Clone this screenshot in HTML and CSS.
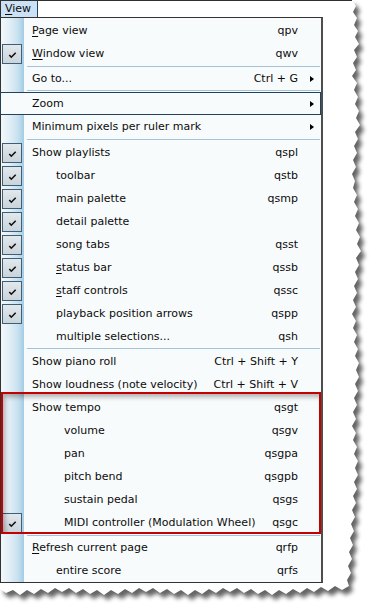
FILE: index.html
```html
<!DOCTYPE html>
<html>
<head>
<meta charset="utf-8">
<link rel="stylesheet" href="styles.css">
</head>
<body>
<div class="screen">
  <svg class="torn" width="374" height="609" viewBox="0 0 374 609">
    <defs>
      <filter id="blur" x="-10%" y="-10%" width="120%" height="120%"><feGaussianBlur stdDeviation="2"/></filter>
      <path id="paper" d="M0,0 L352,0 L356,6 L353,12 L357,18 L354,25 L358,31 L355,37 L359,44 L354,50 L357,57 L353,63 L356,70 L352,76 L357,83 L354,90 L358,97 L355,104 L359,111 L356,118 L360,125 L355,132 L358,139 L354,146 L357,153 L353,160 L356,167 L352,174 L355,181 L353,188 L357,195 L354,202 L358,209 L355,216 L359,223 L356,230 L360,237 L357,244 L361,251 L356,258 L359,265 L355,272 L358,279 L354,286 L357,293 L353,300 L356,307 L352,314 L356,321 L353,328 L357,335 L354,342 L358,349 L355,356 L359,363 L356,370 L359,377 L355,384 L358,391 L354,398 L357,405 L353,412 L356,419 L352,426 L356,433 L353,440 L357,447 L354,454 L358,461 L355,468 L358,475 L354,482 L357,489 L353,496 L356,503 L352,510 L355,517 L351,524 L354,531 L350,538 L353,545 L349,552 L352,559 L348,566 L351,573 L347,580 L349,586 L342,590 L335,586 L328,591 L321,587 L314,592 L307,588 L300,593 L293,589 L286,594 L279,590 L272,595 L265,590 L258,594 L251,589 L244,593 L237,588 L230,592 L223,588 L216,593 L209,589 L202,594 L195,590 L188,595 L181,590 L174,594 L167,589 L160,593 L153,588 L146,592 L139,588 L132,593 L125,589 L118,594 L111,590 L104,595 L97,590 L90,594 L83,589 L76,593 L69,588 L62,592 L55,588 L48,593 L41,589 L34,594 L27,590 L20,595 L13,590 L6,593 L0,589 Z"/>
    </defs>
    <use href="#paper" class="shadow" transform="translate(4,5)" filter="url(#blur)"/>
    <use href="#paper" class="sheet"/>
  </svg>

  <div class="bar"><span class="bar-item"><u>V</u>iew</span></div>

  <div class="menu">
    <div class="row"><span class="ck"></span><span class="lbl"><u>P</u>age view</span><span class="key">qpv</span><span class="sub"></span></div>
    <div class="row"><span class="ck on"><svg viewBox="0 0 18 18"><path d="M6.3 10 L8.3 12.2 L12.7 7.8"/></svg></span><span class="lbl"><u>W</u>indow view</span><span class="key">qwv</span><span class="sub"></span></div>
    <div class="sep sep-a"></div>
    <div class="row short"><span class="ck"></span><span class="lbl">Go to...</span><span class="key">Ctrl + G</span><span class="sub has"></span></div>
    <div class="sep sep-b"></div>
    <div class="row hot"><span class="ck"></span><span class="lbl">Zoom</span><span class="key"></span><span class="sub has"></span></div>
    <div class="row"><span class="ck"></span><span class="lbl">Minimum pixels per ruler mark</span><span class="key"></span><span class="sub has"></span></div>
    <div class="sep sep-a"></div>
    <div class="row"><span class="ck on"><svg viewBox="0 0 18 18"><path d="M6.3 10 L8.3 12.2 L12.7 7.8"/></svg></span><span class="lbl">Show playlists</span><span class="key">qspl</span><span class="sub"></span></div>
    <div class="row"><span class="ck on"><svg viewBox="0 0 18 18"><path d="M6.3 10 L8.3 12.2 L12.7 7.8"/></svg></span><span class="lbl i1">toolbar</span><span class="key">qstb</span><span class="sub"></span></div>
    <div class="row"><span class="ck on"><svg viewBox="0 0 18 18"><path d="M6.3 10 L8.3 12.2 L12.7 7.8"/></svg></span><span class="lbl i1">main palette</span><span class="key">qsmp</span><span class="sub"></span></div>
    <div class="row"><span class="ck on"><svg viewBox="0 0 18 18"><path d="M6.3 10 L8.3 12.2 L12.7 7.8"/></svg></span><span class="lbl i1">detail palette</span><span class="key"></span><span class="sub"></span></div>
    <div class="row"><span class="ck on"><svg viewBox="0 0 18 18"><path d="M6.3 10 L8.3 12.2 L12.7 7.8"/></svg></span><span class="lbl i1">song tabs</span><span class="key">qsst</span><span class="sub"></span></div>
    <div class="row"><span class="ck on"><svg viewBox="0 0 18 18"><path d="M6.3 10 L8.3 12.2 L12.7 7.8"/></svg></span><span class="lbl i1"><u>s</u>tatus bar</span><span class="key">qssb</span><span class="sub"></span></div>
    <div class="row"><span class="ck on"><svg viewBox="0 0 18 18"><path d="M6.3 10 L8.3 12.2 L12.7 7.8"/></svg></span><span class="lbl i1"><u>s</u>taff controls</span><span class="key">qssc</span><span class="sub"></span></div>
    <div class="row"><span class="ck on"><svg viewBox="0 0 18 18"><path d="M6.3 10 L8.3 12.2 L12.7 7.8"/></svg></span><span class="lbl i1">playback position arrows</span><span class="key">qspp</span><span class="sub"></span></div>
    <div class="row"><span class="ck"></span><span class="lbl i1">multiple selections...</span><span class="key">qsh</span><span class="sub"></span></div>
    <div class="sep sep-b"></div>
    <div class="row"><span class="ck"></span><span class="lbl">Show piano roll</span><span class="key">Ctrl + Shift + Y</span><span class="sub"></span></div>
    <div class="row"><span class="ck"></span><span class="lbl">Show loudness (note velocity)</span><span class="key">Ctrl + Shift + V</span><span class="sub"></span></div>
    <div class="row"><span class="ck"></span><span class="lbl">Show tempo</span><span class="key">qsgt</span><span class="sub"></span></div>
    <div class="row"><span class="ck"></span><span class="lbl i2">volume</span><span class="key">qsgv</span><span class="sub"></span></div>
    <div class="row"><span class="ck"></span><span class="lbl i2">pan</span><span class="key">qsgpa</span><span class="sub"></span></div>
    <div class="row"><span class="ck"></span><span class="lbl i2">pitch bend</span><span class="key">qsgpb</span><span class="sub"></span></div>
    <div class="row"><span class="ck"></span><span class="lbl i2">sustain pedal</span><span class="key">qsgs</span><span class="sub"></span></div>
    <div class="row"><span class="ck on"><svg viewBox="0 0 18 18"><path d="M6.3 10 L8.3 12.2 L12.7 7.8"/></svg></span><span class="lbl i2">MIDI controller (Modulation Wheel)</span><span class="key">qsgc</span><span class="sub"></span></div>
    <div class="sep sep-c"></div>
    <div class="row"><span class="ck"></span><span class="lbl"><u>R</u>efresh current page</span><span class="key">qrfp</span><span class="sub"></span></div>
    <div class="row"><span class="ck"></span><span class="lbl i1">entire score</span><span class="key">qrfs</span><span class="sub"></span></div>
  </div>

  <div class="callout"></div>
</div>
</body>
</html>
```

FILE: styles.css
```css
* { box-sizing: border-box; }
html, body { margin: 0; padding: 0; background: #ffffff; }
body {
  font-family: "DejaVu Sans", "Liberation Sans", sans-serif;
  font-size: 11px;
  color: #0c0c0c;
}
.screen {
  position: relative;
  width: 374px;
  height: 609px;
  overflow: hidden;
}
.torn {
  position: absolute;
  left: 0;
  top: 0;
  z-index: 0;
}
.torn .shadow { fill: #4a4a4a; opacity: 0.85; }
.torn .sheet { fill: #ffffff; }

.bar {
  position: relative;
  z-index: 1;
  width: 352px;
  height: 17px;
  border-top: 1px solid #2f2f2f;
  border-left: 1px solid #2f2f2f;
  display: flex;
}
.bar-item {
  width: 37px;
  height: 16px;
  line-height: 16px;
  padding-left: 4px;
  background: #cbe1f5;
  border-right: 1px solid #27445e;
}
u { text-decoration: underline; text-underline-offset: 2px; }

.menu {
  position: relative;
  z-index: 1;
  width: 323px;
  border: 1px solid #333333;
  border-right: 2px solid #4e4e4e;
  padding-top: 1px;
  background:
    linear-gradient(90deg, #f2f8fb 0px, #e3eff6 8px, #c7e1ef 17px, #a2cce4 23px, #f8fbfc 23px);
}
.row {
  display: flex;
  align-items: center;
  height: 23px;
  line-height: 23px;
  white-space: nowrap;
}
.row.short { height: 22px; line-height: 22px; }
.row.hot {
  margin-left: -1px;
  border: 1px solid #23415a;
  background: #f8fbfc;
  line-height: 21px;
}
.row.hot .ck { margin-left: 1px; }
.row.hot .sub { width: 22px; }
.ck {
  flex: none;
  width: 20px;
  height: 20px;
  margin-left: 1px;
}
.ck.on {
  border: 1px solid #3d6078;
  background: linear-gradient(#e2e8ec, #cad4da);
}
.ck svg {
  display: block;
  width: 18px;
  height: 18px;
}
.ck path {
  fill: none;
  stroke: #111111;
  stroke-width: 1.6;
}
.lbl {
  flex: 1;
  padding-left: 10px;
}
.lbl.i1 { padding-left: 34px; }
.lbl.i2 { padding-left: 42px; }
.key {
  flex: none;
  text-align: right;
}
.sub {
  flex: none;
  width: 23px;
  height: 100%;
  display: flex;
  align-items: center;
  padding-left: 12px;
}
.sub.has::after {
  content: "";
  width: 0;
  height: 0;
  border-left: 4px solid #000000;
  border-top: 3.5px solid transparent;
  border-bottom: 3.5px solid transparent;
}
.sep {
  display: flex;
  padding-left: 26px;
  padding-right: 1px;
}
.sep::before {
  content: "";
  flex: 1;
  height: 1px;
  background: #a4c3d8;
}
.sep-a { height: 3px; align-items: center; }
.sep-b { height: 2px; align-items: flex-start; }
.sep-c { height: 2px; align-items: flex-end; }

.callout {
  position: absolute;
  z-index: 2;
  left: 1px;
  top: 392px;
  width: 320px;
  height: 142px;
  border: 2px solid #c40000;
  box-shadow: inset 3px 4px 5px -1px rgba(0, 0, 0, 0.3);
}
```
